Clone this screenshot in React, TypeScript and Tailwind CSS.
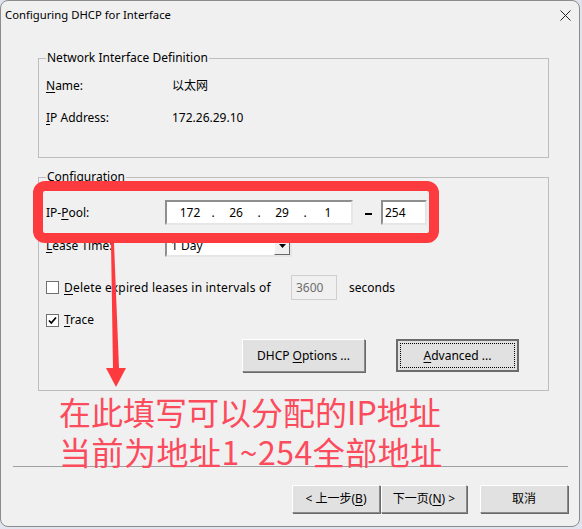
import type { ReactNode } from "react";

const uiFont = "[font-family:'Noto_Sans','Noto_Sans_CJK_SC',sans-serif]";

function GroupBox({ title, className, children }: { title: string; className?: string; children: ReactNode }) {
  return (
    <fieldset className={`ml-[37px] w-[511px] border border-[#bdbdbd] px-[7px] ${className ?? ""}`}>
      <legend className="px-px leading-4">{title}</legend>
      {children}
    </fieldset>
  );
}

function Key({ children }: { children: string }) {
  return <span className="underline underline-offset-[2px]">{children}</span>;
}

function CheckBox({ checked }: { checked?: boolean }) {
  return (
    <span className="flex h-[13px] w-[13px] shrink-0 items-center justify-center border border-[#707070] bg-white">
      {checked && (
        <svg width="9" height="9" viewBox="0 0 9 9">
          <path d="M1 4.5 L3.3 7 L8 1.5" fill="none" stroke="#000" strokeWidth="1.8" />
        </svg>
      )}
    </span>
  );
}

function PushButton({ children, isDefault, className }: { children: ReactNode; isDefault?: boolean; className?: string }) {
  if (isDefault) {
    return (
      <div className={`flex border-2 border-[#6b6b6b] bg-[#e1e1e1] p-[2px] ${className ?? ""}`}>
        <div className="flex flex-1 items-center justify-center border border-dotted border-black">{children}</div>
      </div>
    );
  }
  return (
    <div
      className={`flex items-center justify-center border border-t-white border-l-white border-r-[#8a8a8a] border-b-[#8a8a8a] bg-[#e1e1e1] shadow-[1px_1px_0_#696969] ${className ?? ""}`}
    >
      {children}
    </div>
  );
}

function Sunken({ className, children }: { className?: string; children?: ReactNode }) {
  return (
    <div
      className={`border-2 border-t-[#8e8e8e] border-l-[#8e8e8e] border-r-[#e6e6e6] border-b-[#e6e6e6] ${className ?? ""}`}
    >
      {children}
    </div>
  );
}

export default function App() {
  const octets = ["172", "26", "29", "1"];

  return (
    <div className={`relative h-[529px] w-[582px] overflow-hidden bg-[#dfe4ee] text-[12px] text-black ${uiFont}`}>
      <div className="h-[527px] w-[580px] rounded-[8px] border border-[#8c8c8c] bg-[#f0f0f0]">
        {/* title bar */}
        <div className="flex h-[29px] items-center justify-between pl-[4px] pr-[8px]">
          <span className="text-[11.3px]">Configuring DHCP for Interface</span>
          <svg width="11" height="11" viewBox="0 0 11 11">
            <path d="M0.5 0.5 L10.5 10.5 M10.5 0.5 L0.5 10.5" stroke="#222" strokeWidth="1" />
          </svg>
        </div>

        <GroupBox title="Network Interface Definition" className="mt-[20px] pb-[31px]">
          <div className="mt-[12px] flex h-4 items-center">
            <span className="w-[126px]">
              <Key>N</Key>ame:
            </span>
            <span>以太网</span>
          </div>
          <div className="mt-[16px] flex h-4 items-center">
            <span className="w-[126px]">
              <Key>I</Key>P Address:
            </span>
            <span>172.26.29.10</span>
          </div>
        </GroupBox>

        <GroupBox title="Configuration" className="mt-[11px] pb-[18px]">
          <div className="mt-[15px] flex h-[25px] items-center">
            <span className="w-[119px]">
              IP-<Key>P</Key>ool:
            </span>
            <Sunken className="flex h-[25px] w-[188px] items-center bg-white pl-[4px]">
              {octets.map((o, i) => (
                <div key={o + i} className="flex">
                  <span className="w-[38px] text-center">{o}</span>
                  {i < 3 && <span className="w-[8px] text-center">.</span>}
                </div>
              ))}
            </Sunken>
            <span className="ml-[12px] mr-[9px] mt-[2px] h-[2px] w-[7px] bg-black" />
            <Sunken className="flex h-[25px] w-[46px] items-center bg-white pl-[2px]">254</Sunken>
          </div>

          <div className="mt-[9px] flex h-[23px] items-center">
            <span className="w-[119px]">
              <Key>L</Key>ease Time:
            </span>
            <Sunken className="flex h-[23px] w-[127px] items-center bg-white">
              <span className="flex-1 pl-[4px]">1 Day</span>
              <span className="flex h-full w-[16px] items-center justify-center border border-t-white border-l-white border-r-[#696969] border-b-[#696969] bg-[#f0f0f0]">
                <svg width="7" height="4" viewBox="0 0 7 4">
                  <path d="M0 0 H7 L3.5 4 Z" fill="#000" />
                </svg>
              </span>
            </Sunken>
          </div>

          <div className="mt-[18px] flex h-[25px] items-center">
            <div className="flex w-[245px] items-center gap-[5px]">
              <CheckBox />
              <span className="tracking-[0.2px]">
                <Key>D</Key>elete expired leases in intervals of
              </span>
            </div>
            <div className="flex h-[25px] w-[46px] items-center border border-[#cfcfcf] pl-[4px] text-[#6d6d6d]">
              3600
            </div>
            <span className="ml-[12px]">seconds</span>
          </div>

          <div className="mt-[12px] flex h-4 items-center gap-[5px]">
            <CheckBox checked />
            <span>
              <Key>T</Key>race
            </span>
          </div>

          <div className="mt-[11px] flex h-[33px] pl-[196px]">
            <PushButton className="h-[33px] w-[123px]">
              DHCP&nbsp;<Key>O</Key>ptions ...
            </PushButton>
            <PushButton isDefault className="ml-[31px] h-[33px] w-[123px]">
              <span>
                <Key>A</Key>dvanced ...
              </span>
            </PushButton>
          </div>
        </GroupBox>

        <div className="h-[75px] pl-[58px] text-[32px] leading-[40px] text-[#fb4b5d] [font-family:'Noto_Sans_CJK_SC',sans-serif]">
          <div>在此填写可以分配的IP地址</div>
          <div className="tracking-[0.5px]">当前为地址1~254全部地址</div>
        </div>

        <div className="ml-[12px] w-[555px] border-t border-[#a0a0a0]" />

        <div className="mt-[18px] flex h-[28px] pl-[291px]">
          <PushButton className="h-[28px] w-[88px]">&lt; 上一步(<Key>B</Key>)</PushButton>
          <PushButton className="ml-px h-[28px] w-[86px]">
            下一页(<Key>N</Key>) &gt;
          </PushButton>
          <PushButton className="ml-[13px] h-[28px] w-[88px]">取消</PushButton>
        </div>
      </div>

      {/* annotation frame around the pool fields */}
      <div className="absolute left-[33px] top-[181px] h-[62px] w-[406px] rounded-[12px] border-[10px] border-[#fd3b3f]" />
      <svg className="absolute left-[100px] top-[240px]" width="32" height="150" viewBox="0 0 32 150">
        <path d="M11 3 L14 3 L19 128 L13 128 Z" fill="#fd3b3f" />
        <path d="M6 128 L26 128 L16 147 Z" fill="#fd3b3f" />
      </svg>
    </div>
  );
}
